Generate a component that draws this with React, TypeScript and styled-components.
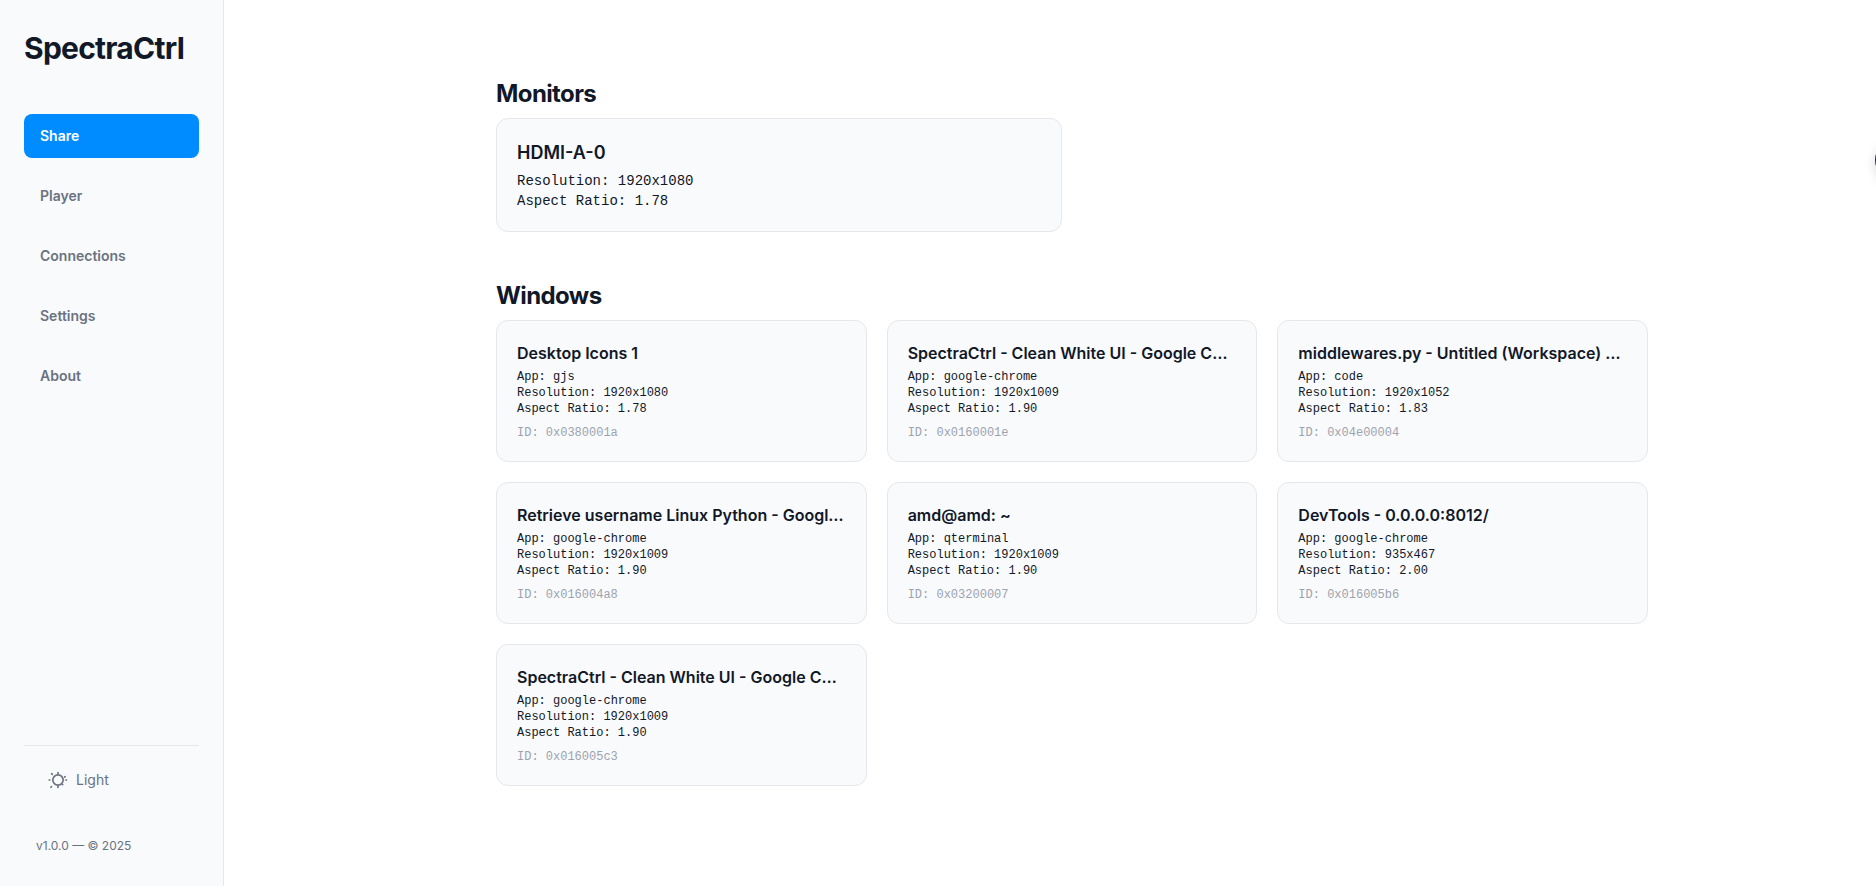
import React, { useState } from "react";
import styled, { createGlobalStyle } from "styled-components";

const GlobalStyle = createGlobalStyle`
  *, *::before, *::after { box-sizing: border-box; }
  body {
    margin: 0;
    background: #ffffff;
    color: #111827;
    font-family: Inter, "Liberation Sans", sans-serif;
    font-size: 16px;
    line-height: 24px;
  }
  h1, h2, h3, p, ul { margin: 0; padding: 0; }
  button { font-family: inherit; cursor: pointer; }
`;

const Page = styled.div`
  display: flex;
  min-height: 100vh;
`;

const Sidebar = styled.aside`
  position: sticky;
  top: 0;
  display: flex;
  flex-direction: column;
  flex: none;
  width: 224px;
  height: 100vh;
  padding: 30px 24px 32px;
  background: #f9fafc;
  border-right: 1px solid #e5e7eb;
`;

const Brand = styled.h1`
  font-size: 30px;
  font-weight: 700;
  line-height: 36px;
  letter-spacing: -0.025em;
`;

const Nav = styled.nav`
  display: flex;
  flex-direction: column;
  gap: 16px;
  margin-top: 48px;
`;

const NavButton = styled.button<{ $active: boolean }>`
  padding: 12px 16px;
  border: 0;
  border-radius: 8px;
  background: ${(p) => (p.$active ? "#008cff" : "transparent")};
  color: ${(p) => (p.$active ? "#ffffff" : "#6b7280")};
  font-size: 14px;
  font-weight: 600;
  line-height: 20px;
  text-align: left;
`;

const SidebarFooter = styled.footer`
  display: flex;
  flex-direction: column;
  gap: 36px;
  margin-top: auto;
  padding-top: 12px;
  border-top: 1px solid #e5e7eb;
  color: #6b7280;
`;

const ThemeButton = styled.button`
  display: flex;
  align-items: center;
  gap: 8px;
  padding: 12px 24px;
  border: 0;
  background: transparent;
  color: inherit;
  font-size: 14px;
  line-height: 20px;
`;

const Version = styled.p`
  padding-left: 12px;
  font-size: 12px;
  line-height: 16px;
`;

const Main = styled.main`
  flex: 1;
  min-width: 0;
  padding: 78px 0 78px 44px;
`;

const Content = styled.div`
  display: flex;
  flex-direction: column;
  gap: 48px;
  max-width: 1152px;
  margin: 0 auto;
`;

const SectionTitle = styled.h2`
  margin-bottom: 8px;
  font-size: 24px;
  font-weight: 700;
  line-height: 32px;
  letter-spacing: -0.025em;
`;

const Grid = styled.div<{ $columns: number }>`
  display: grid;
  grid-template-columns: repeat(${(p) => p.$columns}, minmax(0, 1fr));
  gap: 20px;
`;

const Card = styled.article`
  padding: 20px;
  background: #f9fafc;
  border: 1px solid #e5e7eb;
  border-radius: 12px;
`;

const CardTitle = styled.h3<{ $large?: boolean }>`
  margin-bottom: 4px;
  overflow: hidden;
  font-size: ${(p) => (p.$large ? 18 : 16)}px;
  font-weight: 600;
  line-height: ${(p) => (p.$large ? 28 : 24)}px;
  text-overflow: ellipsis;
  white-space: nowrap;
`;

const Detail = styled.p<{ $large?: boolean }>`
  font-family: "Liberation Mono", monospace;
  font-size: ${(p) => (p.$large ? 14 : 12)}px;
  line-height: ${(p) => (p.$large ? 20 : 16)}px;
`;

const WindowId = styled(Detail)`
  margin-top: 8px;
  color: #9ca3af;
`;

const DrawerHandle = styled.button`
  position: fixed;
  top: 140px;
  right: -39px;
  width: 40px;
  height: 40px;
  border: 0;
  border-radius: 50%;
  background: #1f2937;
  box-shadow: 0 4px 12px rgba(0, 0, 0, 0.15);
`;

const SunIcon = () => (
  <svg
    width="20"
    height="20"
    viewBox="0 0 24 24"
    fill="none"
    stroke="currentColor"
    strokeWidth="2"
    strokeLinecap="round"
    strokeLinejoin="round"
    aria-hidden="true"
  >
    <circle cx="12" cy="12" r="6.2" />
    <path d="M12 3v2M12 19v2M1.4 12h.8M21.4 12h.8M4.4 4.4l.8.8M20.6 8l-.6.4M4.2 20l-.7.7M17.2 17.2l.4.4" />
  </svg>
);

const pages = ["Share", "Player", "Connections", "Settings", "About"];

const monitors = [{ name: "HDMI-A-0", resolution: "1920x1080", ratio: "1.78" }];

const windows = [
  { id: "0x0380001a", title: "Desktop Icons 1", app: "gjs", resolution: "1920x1080", ratio: "1.78" },
  { id: "0x0160001e", title: "SpectraCtrl - Clean White UI - Google Chrome", app: "google-chrome", resolution: "1920x1009", ratio: "1.90" },
  { id: "0x04e00004", title: "middlewares.py - Untitled (Workspace) - Visual Studio Code", app: "code", resolution: "1920x1052", ratio: "1.83" },
  { id: "0x016004a8", title: "Retrieve username Linux Python - Google Chrome", app: "google-chrome", resolution: "1920x1009", ratio: "1.90" },
  { id: "0x03200007", title: "amd@amd: ~", app: "qterminal", resolution: "1920x1009", ratio: "1.90" },
  { id: "0x016005b6", title: "DevTools - 0.0.0.0:8012/", app: "google-chrome", resolution: "935x467", ratio: "2.00" },
  { id: "0x016005c3", title: "SpectraCtrl - Clean White UI - Google Chrome", app: "google-chrome", resolution: "1920x1009", ratio: "1.90" },
];

export default function App() {
  const [page, setPage] = useState("Share");

  return (
    <>
      <GlobalStyle />
      <Page>
        <Sidebar>
          <Brand>SpectraCtrl</Brand>
          <Nav>
            {pages.map((name) => (
              <NavButton key={name} type="button" $active={name === page} onClick={() => setPage(name)}>
                {name}
              </NavButton>
            ))}
          </Nav>
          <SidebarFooter>
            <ThemeButton type="button">
              <SunIcon />
              Light
            </ThemeButton>
            <Version>v1.0.0 — © 2025</Version>
          </SidebarFooter>
        </Sidebar>
        <Main>
          <Content>
            <section>
              <SectionTitle>Monitors</SectionTitle>
              <Grid $columns={2}>
                {monitors.map((m) => (
                  <Card key={m.name}>
                    <CardTitle $large>{m.name}</CardTitle>
                    <Detail $large>Resolution: {m.resolution}</Detail>
                    <Detail $large>Aspect Ratio: {m.ratio}</Detail>
                  </Card>
                ))}
              </Grid>
            </section>
            <section>
              <SectionTitle>Windows</SectionTitle>
              <Grid $columns={3}>
                {windows.map((w) => (
                  <Card key={w.id}>
                    <CardTitle>{w.title}</CardTitle>
                    <Detail>App: {w.app}</Detail>
                    <Detail>Resolution: {w.resolution}</Detail>
                    <Detail>Aspect Ratio: {w.ratio}</Detail>
                    <WindowId>ID: {w.id}</WindowId>
                  </Card>
                ))}
              </Grid>
            </section>
          </Content>
        </Main>
      </Page>
      <DrawerHandle type="button" aria-label="Open panel" />
    </>
  );
}
